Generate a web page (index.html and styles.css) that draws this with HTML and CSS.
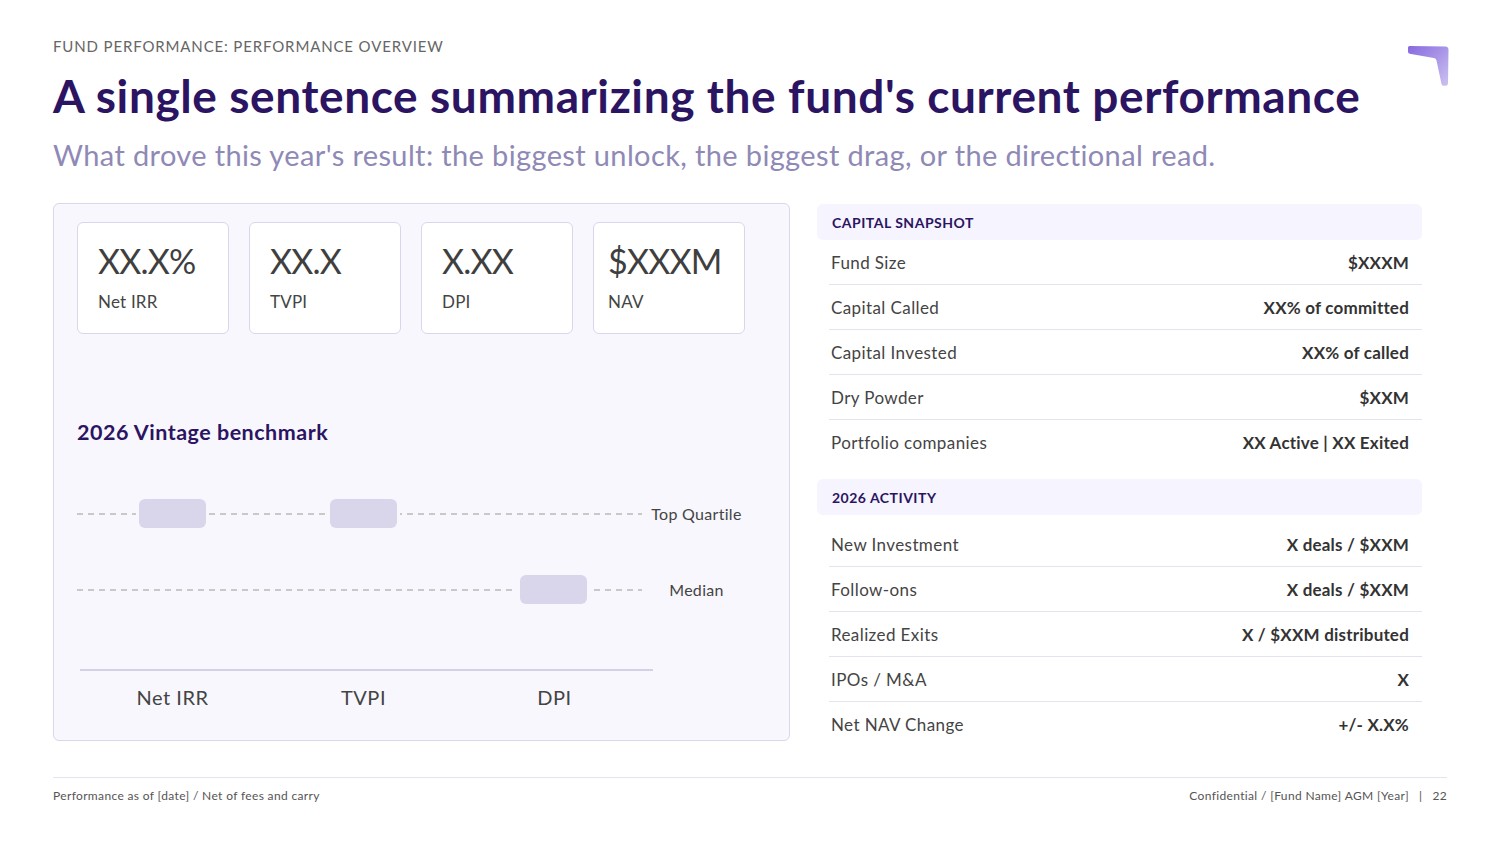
FILE: index.html
```html
<!DOCTYPE html>
<html lang="en">
<head>
<meta charset="utf-8">
<title>Fund Performance</title>
<link rel="stylesheet" href="styles.css">
</head>
<body>
<div class="page">
  <header class="head">
    <div class="head-text">
      <div class="eyebrow">FUND PERFORMANCE: PERFORMANCE OVERVIEW</div>
      <h1 class="title">A single sentence summarizing the fund's current performance</h1>
      <p class="subtitle">What drove this year's result: the biggest unlock, the biggest drag, or the directional read.</p>
    </div>
    <svg class="logo" viewBox="0 0 42 42" width="42" height="42" aria-hidden="true">
      <defs>
        <linearGradient id="lg" x1="0" y1="0" x2="1" y2="1">
          <stop offset="0" stop-color="#8669de"/>
          <stop offset="1" stop-color="#cdc2f1"/>
        </linearGradient>
      </defs>
      <path d="M2.5 1 L38.5 1.5 Q41.5 1.8 41.5 5 L41 38.5 Q40.8 40.8 38.8 40.8 L36.5 40.8 Q34.8 40.8 34.5 39 L29.5 15.5 Q29 13.2 26.8 13 L2.6 8.8 Q1 8.5 1 6.8 L1 2.6 Q1 1 2.5 1 Z" fill="url(#lg)"/>
    </svg>
  </header>

  <main class="main">
    <section class="panel">
      <div class="cards">
        <div class="card"><div class="card-value">XX.X%</div><div class="card-label">Net IRR</div></div>
        <div class="card"><div class="card-value">XX.X</div><div class="card-label">TVPI</div></div>
        <div class="card"><div class="card-value">X.XX</div><div class="card-label">DPI</div></div>
        <div class="card card-wide"><div class="card-value">$XXXM</div><div class="card-label">NAV</div></div>
      </div>

      <h2 class="bench-title">2026 Vintage benchmark</h2>

      <div class="chart">
        <div class="chart-row">
          <div class="track">
            <div class="cell"><span class="box"></span></div>
            <div class="cell"><span class="box"></span></div>
            <div class="cell"></div>
          </div>
          <div class="row-label">Top Quartile</div>
        </div>
        <div class="chart-row median">
          <div class="track">
            <div class="cell"></div>
            <div class="cell"></div>
            <div class="cell"><span class="box"></span></div>
          </div>
          <div class="row-label">Median</div>
        </div>
        <div class="axis"></div>
        <div class="axis-labels">
          <div>Net IRR</div>
          <div>TVPI</div>
          <div>DPI</div>
        </div>
      </div>
    </section>

    <aside class="side">
      <div class="sec-head">CAPITAL SNAPSHOT</div>
      <div class="rows">
        <div class="row"><span>Fund Size</span><b>$XXXM</b></div>
        <div class="row"><span>Capital Called</span><b>XX% of committed</b></div>
        <div class="row"><span>Capital Invested</span><b>XX% of called</b></div>
        <div class="row"><span>Dry Powder</span><b>$XXM</b></div>
        <div class="row"><span>Portfolio companies</span><b>XX Active | XX Exited</b></div>
      </div>
      <div class="sec-head sec-two">2026 ACTIVITY</div>
      <div class="rows rows-two">
        <div class="row"><span>New Investment</span><b>X deals / $XXM</b></div>
        <div class="row"><span>Follow-ons</span><b>X deals / $XXM</b></div>
        <div class="row"><span>Realized Exits</span><b>X / $XXM distributed</b></div>
        <div class="row"><span>IPOs / M&amp;A</span><b>X</b></div>
        <div class="row"><span>Net NAV Change</span><b>+/- X.X%</b></div>
      </div>
    </aside>
  </main>

  <footer class="foot">
    <span>Performance as of [date] / Net of fees and carry</span>
    <span>Confidential / [Fund Name] AGM [Year]<span class="sep">|</span>22</span>
  </footer>
</div>
</body>
</html>
```

FILE: styles.css
```css
* { box-sizing: border-box; }
html, body { margin: 0; padding: 0; background: #ffffff; }
body {
  font-family: Lato, "Noto Sans", sans-serif;
  color: #444444;
}
.page {
  width: 1500px;
  height: 844px;
  padding: 37px 51px 0 53px;
}
.head {
  display: flex;
  justify-content: space-between;
  align-items: flex-start;
}
.eyebrow {
  font-size: 15px;
  line-height: 18px;
  color: #666666;
  letter-spacing: 0.86px;
}
.title {
  margin: 13px 0 0;
  font-size: 46px;
  line-height: 56px;
  font-weight: 700;
  color: #2b1461;
  letter-spacing: 0.6px;
}
.subtitle {
  margin: 13px 0 0;
  font-size: 29px;
  line-height: 36px;
  color: #8f89b6;
  letter-spacing: 0.37px;
}
.logo { margin-top: 8px; flex: none; }

.main {
  display: grid;
  grid-template-columns: 737px 605px;
  column-gap: 27px;
  margin-top: 30px;
  align-items: start;
}
.panel {
  height: 538px;
  background: #f8f7fe;
  border: 1px solid #d9d6ee;
  border-radius: 6px;
  padding: 18px 22px 0 23px;
}
.cards {
  display: flex;
  gap: 20px;
}
.card {
  width: 152px;
  height: 112px;
  background: #ffffff;
  border: 1px solid #d9d6ee;
  border-radius: 6px;
  padding: 16px 0 0 20px;
}
.card-wide { padding-left: 14px; }
.card-value {
  font-size: 34px;
  line-height: 44px;
  color: #3f3f3f;
  letter-spacing: -0.8px;
}
.card-label {
  margin-top: 8px;
  font-size: 17px;
  line-height: 22px;
  color: #444444;
  letter-spacing: 0.2px;
}
.bench-title {
  margin: 86px 0 0;
  font-size: 21.5px;
  line-height: 24px;
  font-weight: 700;
  color: #2b1461;
  letter-spacing: 0.5px;
}
.chart { margin-top: 55px; }
.chart-row {
  display: flex;
  align-items: center;
  height: 29px;
}
.chart-row.median { margin-top: 47px; }
.track {
  display: flex;
  width: 572px;
  height: 29px;
  padding-right: 7px;
  background-image: linear-gradient(to right, #c9c9c9 6px, transparent 6px);
  background-size: 11px 2px;
  background-repeat: repeat-x;
  background-position: 0 center;
  background-clip: content-box;
}
.cell {
  flex: 1;
  display: flex;
  justify-content: center;
}
.cell:last-child { margin-right: -7px; }
.box {
  width: 67px;
  height: 29px;
  background: #d9d5ea;
  border-radius: 6px;
  box-shadow: 0 0 0 3px #f8f7fe;
}
.row-label {
  width: 95px;
  text-align: center;
  font-size: 16px;
  color: #444444;
  letter-spacing: 0.3px;
}
.axis {
  margin: 65px 0 0 3px;
  width: 573px;
  height: 2px;
  background: #d4d0e8;
}
.axis-labels {
  display: flex;
  width: 573px;
  margin-top: 14px;
}
.axis-labels div {
  flex: 1;
  text-align: center;
  font-size: 20px;
  line-height: 24px;
  color: #444444;
  letter-spacing: 0.5px;
}

.side { padding-top: 1px; }
.sec-head {
  height: 36px;
  background: #f6f4fe;
  border-radius: 6px;
  padding-left: 15px;
  display: flex;
  align-items: center;
  font-size: 14px;
  font-weight: 700;
  color: #2b1461;
  letter-spacing: 0.5px;
}
.sec-two { margin-top: 14px; }
.rows { margin-left: 12px; }
.rows-two { margin-top: 7px; }
.row {
  height: 45px;
  display: flex;
  justify-content: space-between;
  align-items: center;
  padding: 0 13px 0 2px;
  border-bottom: 1px solid #e5e3ef;
  font-size: 17px;
  letter-spacing: 0.4px;
}
.row:last-child { border-bottom: none; }
.row span { color: #444444; }
.row b { font-weight: 700; color: #333333; letter-spacing: 0.2px; }

.foot {
  margin: 30px 2px 0 0;
  border-top: 1px solid #e5e3f1;
  padding-top: 10px;
  display: flex;
  justify-content: space-between;
  font-size: 12px;
  line-height: 16px;
  color: #555555;
  letter-spacing: 0.35px;
}
.sep { margin: 0 10px; }
```
